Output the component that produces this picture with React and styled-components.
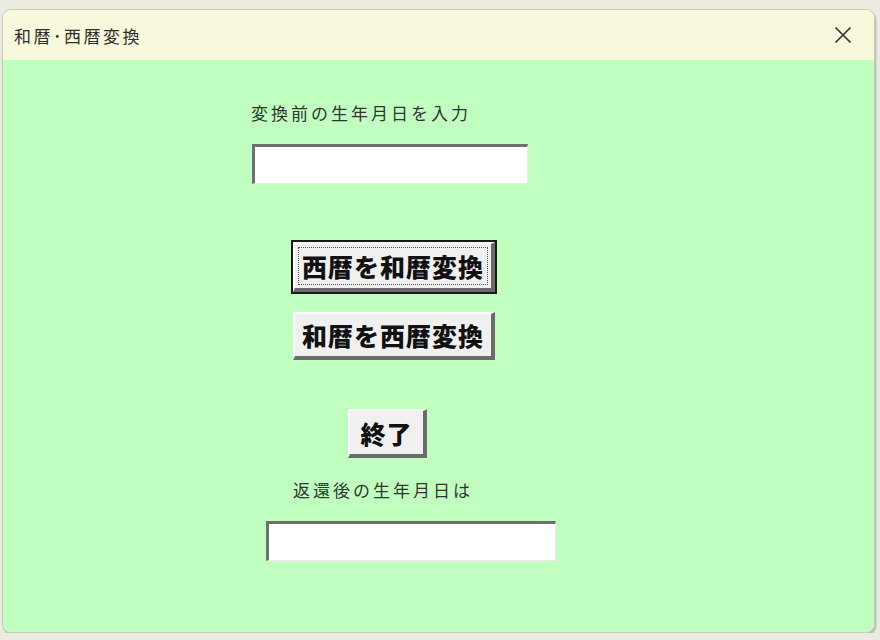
import React from 'react';
import styled, { createGlobalStyle } from 'styled-components';

const Global = createGlobalStyle`
  html, body {
    margin: 0;
    padding: 0;
    background: #ecebe1;
  }
  body {
    font-family: "Noto Sans CJK JP", "Noto Sans", sans-serif;
  }
`;

const Window = styled.div`
  box-sizing: border-box;
  width: 873px;
  height: 624px;
  margin: 9px 0 0 2px;
  border: 1px solid #c8c8b8;
  border-radius: 9px;
  overflow: hidden;
  display: flex;
  flex-direction: column;
  box-shadow: 1px 2px 2px rgba(90, 110, 90, 0.45);
`;

const TitleBar = styled.div`
  height: 50px;
  flex: none;
  background: #f8f8dc;
  display: flex;
  align-items: center;
  justify-content: space-between;
  padding: 0 20px 0 11px;
`;

const Title = styled.span`
  font-size: 17px;
  letter-spacing: 2.5px;
  color: #2e2e2e;
`;

const CloseButton = styled.button`
  width: 22px;
  height: 22px;
  padding: 0;
  border: 0;
  background: none;
  display: flex;
  align-items: center;
  justify-content: center;
  cursor: pointer;
`;

const Body = styled.div`
  flex: 1;
  background: #c0ffc0;
  display: flex;
  flex-direction: column;
  align-items: flex-start;
  padding-top: 42px;
`;

const Label = styled.div`
  margin: ${(p) => p.$top}px 0 0 ${(p) => p.$left}px;
  font-size: 17px;
  line-height: 22px;
  letter-spacing: 3px;
  color: #333;
`;

const Field = styled.input`
  box-sizing: border-box;
  margin: ${(p) => p.$top}px 0 0 ${(p) => p.$left}px;
  width: ${(p) => p.$width}px;
  height: 40px;
  background: #fff;
  border-style: solid;
  border-width: 3px 1px 1px 3px;
  border-color: #6f6f6f #eaeaea #eaeaea #6f6f6f;
  outline: none;
  font-size: 16px;
`;

const Button = styled.button`
  box-sizing: border-box;
  margin: ${(p) => p.$top}px 0 0 ${(p) => p.$left}px;
  width: ${(p) => p.$width}px;
  height: ${(p) => p.$height}px;
  background: #f0f0f0;
  border-style: solid;
  border-width: 2px 4px 4px 2px;
  border-color: #fdfdfd #6b6b6b #6b6b6b #fdfdfd;
  outline: ${(p) => (p.$focused ? '2px solid #1a1a1a' : 'none')};
  outline-offset: 0;
  font-family: "Noto Sans CJK JP", sans-serif;
  font-size: 25px;
  font-weight: 900;
  letter-spacing: 1px;
  color: #111;
  padding: 0;
  display: flex;
  align-items: center;
  justify-content: center;
  position: relative;
  cursor: pointer;

  &::after {
    content: '';
    display: ${(p) => (p.$focused ? 'block' : 'none')};
    position: absolute;
    inset: 3px;
    border: 1px dotted #555;
  }
`;

const CloseIcon = () => (
  <svg width="18" height="18" viewBox="0 0 18 18">
    <path d="M1.5 1.5 L16.5 16.5 M16.5 1.5 L1.5 16.5" stroke="#333" strokeWidth="1.7" fill="none" />
  </svg>
);

export default function App() {
  return (
    <>
      <Global />
      <Window>
        <TitleBar>
          <Title>和暦･西暦変換</Title>
          <CloseButton>
            <CloseIcon />
          </CloseButton>
        </TitleBar>
        <Body>
          <Label $top={0} $left={248}>変換前の生年月日を入力</Label>
          <Field $top={20} $left={249} $width={276} />
          <Button $top={58} $left={290} $width={202} $height={50} $focused>
            西暦を和暦変換
          </Button>
          <Button $top={20} $left={290} $width={202} $height={48}>
            和暦を西暦変換
          </Button>
          <Button $top={49} $left={345} $width={79} $height={49}>
            終了
          </Button>
          <Label $top={21} $left={290}>返還後の生年月日は</Label>
          <Field $top={20} $left={263} $width={290} />
        </Body>
      </Window>
    </>
  );
}
